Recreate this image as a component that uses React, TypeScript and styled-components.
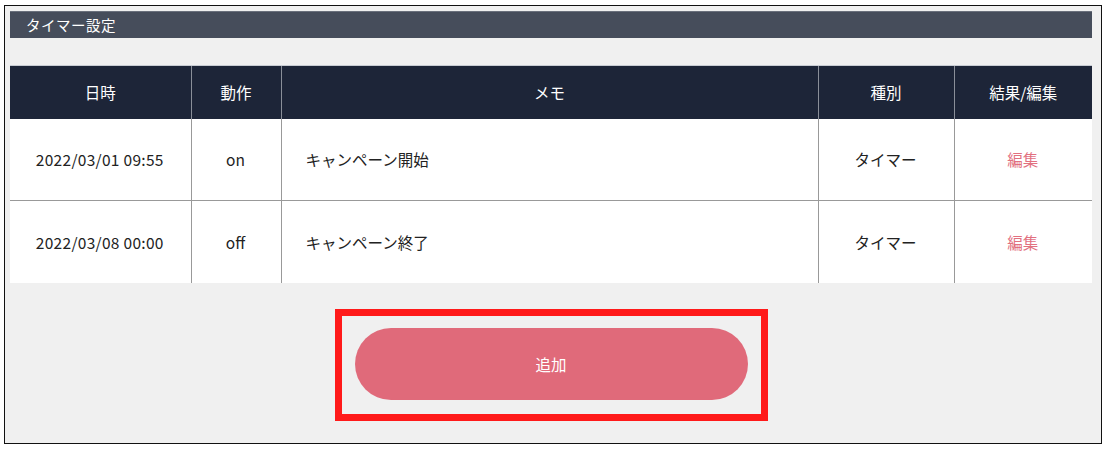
import React from 'react'
import styled, {createGlobalStyle} from 'styled-components'

const GlobalStyle = createGlobalStyle`
  html, body {
    margin: 0;
    padding: 0;
    background: #ffffff;
  }
  body {
    font-family: "Noto Sans CJK JP", "Noto Sans", sans-serif;
    color: #222;
  }
`

const Frame = styled.div`
  box-sizing: border-box;
  width: 1098px;
  height: 439px;
  margin: 5px 0 0 4px;
  border: 1.5px solid #111;
  background: #f0f0f0;
  padding: 5px 9px 0 5px;
`

const TitleBar = styled.div`
  height: 27px;
  box-sizing: border-box;
  background: #464d5b;
  border-top: 1px solid #6a707c;
  color: #fff;
  font-size: 14.5px;
  line-height: 25px;
  padding-left: 16px;
  letter-spacing: 0.5px;
`

const Table = styled.table`
  width: 100%;
  margin-top: 27px;
  border-collapse: collapse;
  table-layout: fixed;
  font-size: 15.5px;
`

const HeadCell = styled.th<{$w: number}>`
  width: ${p => p.$w}px;
  height: 53px;
  box-sizing: border-box;
  background: #1d2538;
  color: #fff;
  font-weight: 400;
  font-size: 15.5px;
  text-align: center;
  border-left: 1px solid #8a8f99;
  border-top: 1px solid #c8ccd3;
  &:first-child {
    border-left: none;
  }
`

const Row = styled.tr`
  background: #fff;
  & + & td {
    border-top: 1px solid #999;
  }
`

const Cell = styled.td<{$left?: boolean; $accent?: boolean; $mono?: boolean}>`
  height: 82px;
  box-sizing: border-box;
  text-align: ${p => (p.$left ? 'left' : 'center')};
  padding-left: ${p => (p.$left ? '24px' : '0')};
  color: ${p => (p.$accent ? '#e2707f' : '#222')};
  letter-spacing: ${p => (p.$mono ? '0.3px' : '0')};
  border-left: 1px solid #999;
  &:first-child {
    border-left: none;
  }
`

const ButtonArea = styled.div`
  display: flex;
  justify-content: center;
  margin-top: 26px;
`

const Highlight = styled.div`
  border: 7px solid #ff1a1a;
  padding: 12px 13px 14px 13px;
`

const AddButton = styled.button`
  width: 393px;
  height: 72px;
  border: none;
  border-radius: 36px;
  background: #e06a7a;
  color: #fff;
  font-family: inherit;
  font-size: 15.5px;
  cursor: pointer;
`

const columns = [
  {label: '日時', w: 181},
  {label: '動作', w: 90},
  {label: 'メモ', w: 537},
  {label: '種別', w: 136},
  {label: '結果/編集', w: 138}
]

const rows = [
  {date: '2022/03/01 09:55', action: 'on', memo: 'キャンペーン開始', kind: 'タイマー'},
  {date: '2022/03/08 00:00', action: 'off', memo: 'キャンペーン終了', kind: 'タイマー'}
]

export default function App() {
  return (
    <>
      <GlobalStyle />
      <Frame>
        <TitleBar>タイマー設定</TitleBar>
        <Table>
          <thead>
            <tr>
              {columns.map(c => (
                <HeadCell key={c.label} $w={c.w}>
                  {c.label}
                </HeadCell>
              ))}
            </tr>
          </thead>
          <tbody>
            {rows.map(r => (
              <Row key={r.date}>
                <Cell $mono>{r.date}</Cell>
                <Cell>{r.action}</Cell>
                <Cell $left>{r.memo}</Cell>
                <Cell>{r.kind}</Cell>
                <Cell $accent>編集</Cell>
              </Row>
            ))}
          </tbody>
        </Table>
        <ButtonArea>
          <Highlight>
            <AddButton type="button">追加</AddButton>
          </Highlight>
        </ButtonArea>
      </Frame>
    </>
  )
}
